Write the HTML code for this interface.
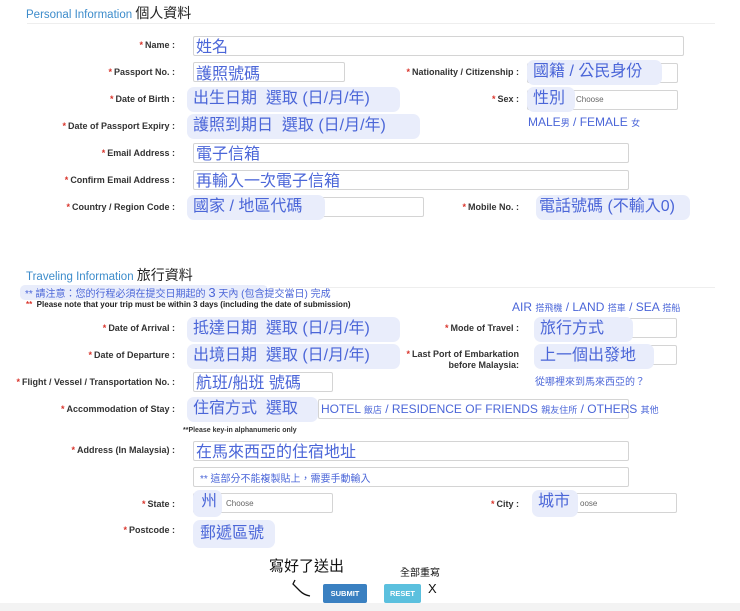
<!DOCTYPE html>
<html><head><meta charset="utf-8"><style>
*{margin:0;padding:0;box-sizing:border-box}
body{width:740px;height:611px;background:#fff;position:relative;overflow:hidden;font-family:"Liberation Sans","Noto Sans CJK TC",sans-serif}
.a{position:absolute;white-space:nowrap}
.lb{position:absolute;font-size:9px;font-weight:bold;color:#333;text-align:right;white-space:nowrap;line-height:11px}
.lb b{color:#d9342b;margin-right:2px}
.in{position:absolute;border:1px solid #d4d4d4;border-radius:2px;background:#fff}
.hl{position:absolute;background:#e9edfb;border-radius:7px;color:#4b66d8;font-size:16px;line-height:24px;height:25px;padding-left:6px;white-space:nowrap}
.bl{color:#4b66d8}
.gr{position:absolute;font-size:8px;color:#666}
</style></head><body>
<div class="a" style="left:26px;top:3px;font-size:11.5px;color:#3d8ccb">Personal Information <span style="color:#222;font-size:14px">個人資料</span></div>
<div class="a" style="left:27px;top:23px;width:688px;height:1px;background:#eee"></div>

<div class="lb" style="right:565px;top:40px"><b>*</b>Name :</div>
<div class="in" style="left:193px;top:36px;width:491px;height:20px"></div>
<div class="a bl" style="left:196px;top:33px;font-size:16px">姓名</div>

<div class="lb" style="right:565px;top:67px"><b>*</b>Passport No. :</div>
<div class="in" style="left:193px;top:62px;width:152px;height:20px"></div>
<div class="a bl" style="left:196px;top:60px;font-size:16px">護照號碼</div>
<div class="lb" style="right:221px;top:67px"><b>*</b>Nationality / Citizenship :</div>
<div class="in" style="left:527px;top:63px;width:151px;height:20px"></div>
<div class="hl" style="left:527px;top:60px;width:135px">國籍 / 公民身份</div>

<div class="lb" style="right:565px;top:94px"><b>*</b>Date of Birth :</div>
<div class="hl" style="left:187px;top:87px;width:213px">出生日期&nbsp; 選取 (日/月/年)</div>
<div class="lb" style="right:221px;top:94px"><b>*</b>Sex :</div>
<div class="in" style="left:527px;top:90px;width:151px;height:20px"></div>
<div class="gr" style="left:576px;top:95px">Choose</div>
<div class="hl" style="left:527px;top:87px;width:48px">性別</div>

<div class="lb" style="right:565px;top:121px"><b>*</b>Date of Passport Expiry :</div>
<div class="hl" style="left:187px;top:114px;width:233px">護照到期日&nbsp; 選取 (日/月/年)</div>
<div class="a bl" style="left:528px;top:115px;font-size:12px">MALE<span style="font-size:9px">男</span> / FEMALE <span style="font-size:9px">女</span></div>

<div class="lb" style="right:565px;top:148px"><b>*</b>Email Address :</div>
<div class="in" style="left:193px;top:143px;width:436px;height:20px"></div>
<div class="a bl" style="left:196px;top:140px;font-size:16px">電子信箱</div>

<div class="lb" style="right:565px;top:175px"><b>*</b>Confirm Email Address :</div>
<div class="in" style="left:193px;top:170px;width:436px;height:20px"></div>
<div class="a bl" style="left:196px;top:167px;font-size:16px">再輸入一次電子信箱</div>

<div class="lb" style="right:565px;top:202px"><b>*</b>Country / Region Code :</div>
<div class="in" style="left:193px;top:197px;width:231px;height:20px"></div>
<div class="hl" style="left:187px;top:195px;width:138px">國家 / 地區代碼</div>
<div class="lb" style="right:221px;top:202px"><b>*</b>Mobile No. :</div>
<div class="hl" style="left:536px;top:195px;width:154px;padding-left:3px">電話號碼 (不輸入0)</div>

<div class="a" style="left:26px;top:265px;font-size:11.5px;color:#3d8ccb">Traveling Information <span style="color:#222;font-size:14px">旅行資料</span></div>
<div class="a" style="left:270px;top:287px;width:445px;height:1px;background:#eee"></div>
<div class="a" style="left:20px;top:285px;width:248px;height:15px;background:#e9edfb;border-radius:5px"></div>
<div class="a bl" style="left:25px;top:285px;font-size:10px">** 請注意：您的行程必須在提交日期起的 <span style="font-size:13px">3</span> 天內 (包含提交當日) 完成</div>
<div class="a" style="left:26px;top:300px;font-size:8px;font-weight:bold;color:#222"><span style="color:#d9342b">**</span>&nbsp; Please note that your trip must be within 3 days (including the date of submission)</div>
<div class="a bl" style="left:512px;top:300px;font-size:12px">AIR <span style="font-size:9px">搭飛機</span> / LAND <span style="font-size:9px">搭車</span> / SEA <span style="font-size:9px">搭船</span></div>

<div class="lb" style="right:565px;top:323px"><b>*</b>Date of Arrival :</div>
<div class="hl" style="left:187px;top:317px;width:213px">抵達日期&nbsp; 選取 (日/月/年)</div>
<div class="lb" style="right:221px;top:323px"><b>*</b>Mode of Travel :</div>
<div class="in" style="left:537px;top:318px;width:140px;height:20px"></div>
<div class="hl" style="left:534px;top:317px;width:99px">旅行方式</div>

<div class="lb" style="right:565px;top:350px"><b>*</b>Date of Departure :</div>
<div class="hl" style="left:187px;top:344px;width:213px">出境日期&nbsp; 選取 (日/月/年)</div>
<div class="lb" style="right:221px;top:349px"><b>*</b>Last Port of Embarkation<br>before Malaysia:</div>
<div class="in" style="left:537px;top:345px;width:140px;height:20px"></div>
<div class="hl" style="left:534px;top:344px;width:120px">上一個出發地</div>

<div class="lb" style="right:565px;top:377px"><b>*</b>Flight / Vessel / Transportation No. :</div>
<div class="in" style="left:193px;top:372px;width:140px;height:20px"></div>
<div class="a bl" style="left:196px;top:369px;font-size:16px">航班/船班 號碼</div>
<div class="a bl" style="left:535px;top:373px;font-size:10px">從哪裡來到馬來西亞的？</div>

<div class="lb" style="right:565px;top:404px"><b>*</b>Accommodation of Stay :</div>
<div class="in" style="left:318px;top:399px;width:311px;height:20px"></div>
<div class="hl" style="left:187px;top:397px;width:131px">住宿方式&nbsp; 選取</div>
<div class="a bl" style="left:321px;top:402px;font-size:12px">HOTEL <span style="font-size:9px">飯店</span> / RESIDENCE OF FRIENDS <span style="font-size:9px">親友住所</span> / OTHERS <span style="font-size:9px">其他</span></div>

<div class="a" style="left:183px;top:427px;font-size:7px;font-weight:bold;color:#333">**Please key-in alphanumeric only</div>

<div class="lb" style="right:565px;top:445px"><b>*</b>Address (In Malaysia) :</div>
<div class="in" style="left:193px;top:441px;width:436px;height:20px"></div>
<div class="a bl" style="left:196px;top:438px;font-size:16px">在馬來西亞的住宿地址</div>
<div class="in" style="left:193px;top:467px;width:436px;height:20px"></div>
<div class="a bl" style="left:200px;top:470px;font-size:10px">** 這部分不能複製貼上，需要手動輸入</div>

<div class="lb" style="right:565px;top:499px"><b>*</b>State :</div>
<div class="in" style="left:193px;top:493px;width:140px;height:20px"></div>
<div class="gr" style="left:226px;top:499px">Choose</div>
<div class="hl" style="left:193px;top:490px;width:29px;padding-left:8px;height:27px">州</div>
<div class="lb" style="right:221px;top:499px"><b>*</b>City :</div>
<div class="in" style="left:537px;top:493px;width:140px;height:20px"></div>
<div class="gr" style="left:580px;top:499px">oose</div>
<div class="hl" style="left:532px;top:490px;width:46px;height:27px">城市</div>

<div class="lb" style="right:565px;top:525px"><b>*</b>Postcode :</div>
<div class="hl" style="left:193px;top:520px;width:82px;height:28px;padding-left:7px;line-height:28px">郵遞區號</div>

<div class="a" style="left:269px;top:555px;font-size:15px;color:#111">寫好了送出</div>
<div class="a" style="left:400px;top:564px;font-size:10px;color:#111">全部重寫</div>
<svg class="a" style="left:290px;top:578px" width="24" height="22"><path d="M5 2 L3 6 Q6 9 10 13 Q14 17 20 18" stroke="#111" stroke-width="1.3" fill="none"/></svg>
<div class="a" style="left:323px;top:584px;width:44px;height:19px;background:#3a80c1;border-radius:2px;color:#fff;font-size:7.5px;font-weight:bold;text-align:center;line-height:19px">SUBMIT</div>
<div class="a" style="left:384px;top:584px;width:37px;height:19px;background:#5bc0de;border-radius:2px;color:#fff;font-size:7.5px;font-weight:bold;text-align:center;line-height:19px">RESET</div>
<div class="a" style="left:428px;top:581px;font-size:13px;color:#111">X</div>
<div class="a" style="left:0;top:603px;width:740px;height:8px;background:#f3f3f3"></div>
</body></html>
